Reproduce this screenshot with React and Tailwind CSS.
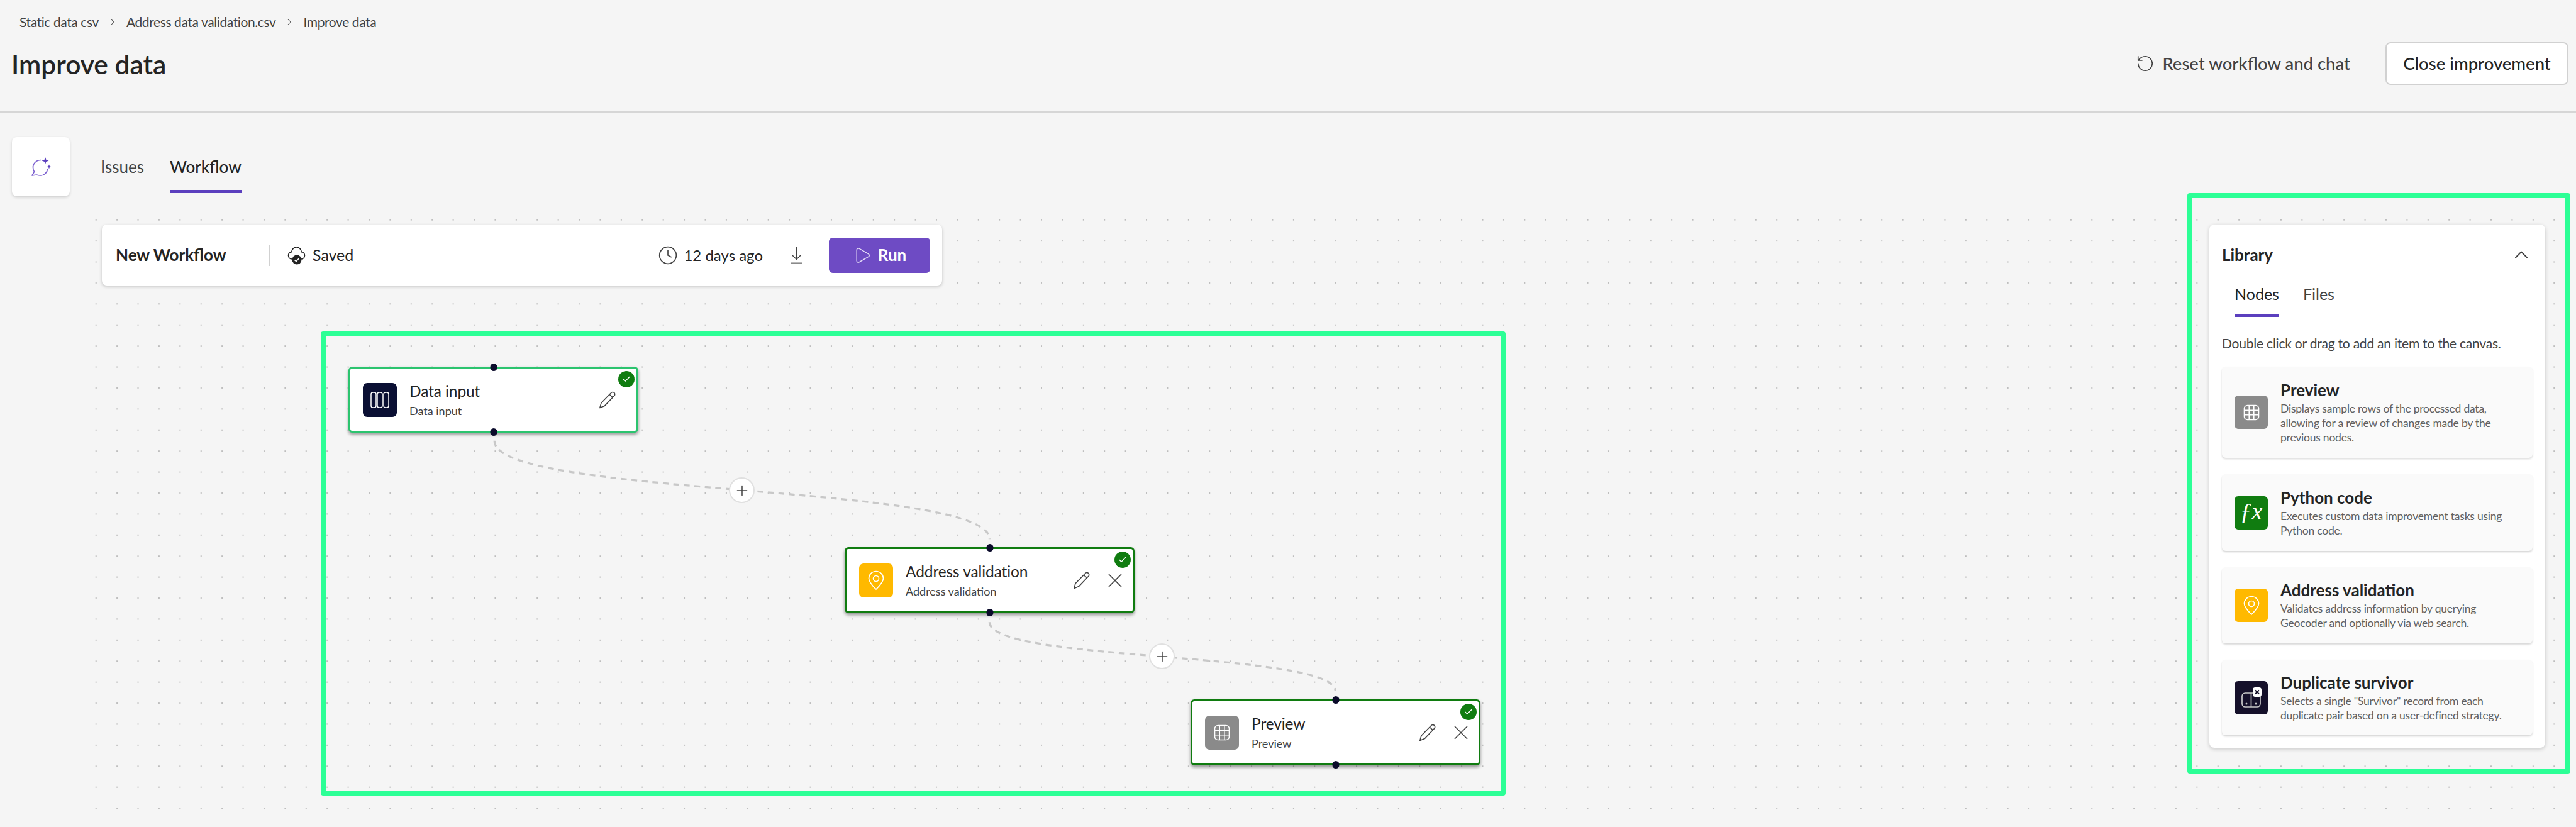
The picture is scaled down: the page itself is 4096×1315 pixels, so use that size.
import { ChevronRight, ChevronUp, Clock, Play, Plus, RotateCcw, Check } from 'lucide-react';

const library = [
  {
    title: 'Preview',
    lines: ['Displays sample rows of the processed data,', 'allowing for a review of changes made by the', 'previous nodes.'],
    color: 'bg-[#8a8a8a]',
    height: 'h-[145px]',
    icon: <GridIcon />,
  },
  {
    title: 'Python code',
    lines: ['Executes custom data improvement tasks using', 'Python code.'],
    color: 'bg-[#107c10]',
    height: 'h-[122px]',
    icon: <FxIcon />,
  },
  {
    title: 'Address validation',
    lines: ['Validates address information by querying', 'Geocoder and optionally via web search.'],
    color: 'bg-[#ffb900]',
    height: 'h-[121px]',
    icon: <PinIcon />,
  },
  {
    title: 'Duplicate survivor',
    lines: ['Selects a single "Survivor" record from each', 'duplicate pair based on a user-defined strategy.'],
    color: 'bg-[#15102a]',
    height: 'h-[120px]',
    icon: <DuplicateIcon />,
  },
];

function GridIcon() {
  return (
    <svg width="26" height="26" viewBox="0 0 26 26" fill="none" stroke="white" strokeWidth="1.6">
      <rect x="1.5" y="1.5" width="23" height="23" rx="5" />
      <path d="M9.2 1.5V24.5M16.8 1.5V24.5M1.5 9.2H24.5M1.5 16.8H24.5" />
    </svg>
  );
}

function FxIcon() {
  return <span className="font-['Liberation_Serif',serif] italic text-[38px] leading-none text-white -mt-1">ƒx</span>;
}

function PinIcon() {
  return (
    <svg width="26" height="32" viewBox="0 0 26 32" fill="none" stroke="white" strokeWidth="1.7">
      <path d="M13 1.5C6.5 1.5 1.5 6.5 1.5 12.8C1.5 19 8.5 25.5 13 30C17.5 25.5 24.5 19 24.5 12.8C24.5 6.5 19.5 1.5 13 1.5Z" />
      <circle cx="13" cy="13" r="4.5" />
    </svg>
  );
}

function DataIcon() {
  return (
    <svg width="30" height="26" viewBox="0 0 30 26" fill="none" stroke="white" strokeWidth="1.5">
      <rect x="1" y="1" width="8" height="24" rx="3" />
      <rect x="11" y="1" width="8" height="24" rx="3" />
      <rect x="21" y="1" width="8" height="24" rx="3" />
    </svg>
  );
}

function DuplicateIcon() {
  return (
    <svg width="32" height="32" viewBox="0 0 32 32" fill="none">
      <rect x="1" y="9" width="29" height="22" rx="5" stroke="#c8c8c8" strokeWidth="1.7" />
      <path d="M15.5 9V31" stroke="#c8c8c8" strokeWidth="1.7" />
      <circle cx="8" cy="26" r="1.5" fill="#c8c8c8" />
      <circle cx="23" cy="26" r="1.5" fill="#c8c8c8" />
      <rect x="18" y="0" width="14" height="15" rx="4" fill="white" />
      <path d="M22 4.5L28 10.5M28 4.5L22 10.5" stroke="#15102a" strokeWidth="1.8" />
    </svg>
  );
}

function ChatIcon() {
  return (
    <svg width="32" height="32" viewBox="0 0 32 32" fill="none">
      <path d="M16 5.5C9 5.5 3.5 10.5 3.5 17C3.5 20 4.5 22.5 5.5 24L2 30L9 29C11 29.5 13 30 15 30C21.5 30 26.5 25 26.5 19" stroke="#7b5fcf" strokeWidth="1.7" strokeLinejoin="round" />
      <path d="M23 1L24.4 5.1L28.5 6.5L24.4 7.9L23 12L21.6 7.9L17.5 6.5L21.6 5.1Z" fill="#5b3fbe" />
      <path d="M29 12.5L29.9 15.1L32 16L29.9 16.9L29 19.5L28.1 16.9L26 16L28.1 15.1Z" fill="#5b3fbe" />
    </svg>
  );
}

function CloudIcon() {
  return (
    <svg width="29" height="30" viewBox="0 0 29 30" fill="none">
      <path d="M8 21C4 21 1.5 18.4 1.5 15.2C1.5 12.2 3.7 9.9 6.6 9.6C7.2 5.3 10.4 2 14.5 2C18.6 2 21.8 5.3 22.4 9.6C25.3 9.9 27.5 12.2 27.5 15.2C27.5 18.4 25 21 21 21" stroke="#242424" strokeWidth="1.6" />
      <circle cx="15" cy="22" r="7.5" fill="#242424" />
      <path d="M11.5 22.3L14 24.7L18.5 19.8" stroke="white" strokeWidth="1.6" />
    </svg>
  );
}

function DownloadIcon() {
  return (
    <svg width="21" height="29" viewBox="0 0 21 29" fill="none">
      <path d="M10.5 1V21M3 14L10.5 21.5L18 14" stroke="#424242" strokeWidth="1.5" />
      <path d="M1 27.5H20" stroke="#8a8a8a" strokeWidth="2.2" />
    </svg>
  );
}

function PencilIcon() {
  return (
    <svg width="28" height="28" viewBox="0 0 28 28" fill="none" stroke="#424242" strokeWidth="1.6" strokeLinejoin="round">
      <path d="M19.6 2.7a3.4 3.4 0 0 1 5.2 4.6L9.2 23.6L1.8 26.4L4 18.8Z" />
      <path d="M17.2 5.4L22.6 10" />
    </svg>
  );
}

function CloseIcon() {
  return (
    <svg width="22" height="22" viewBox="0 0 22 22" fill="none" stroke="#424242" strokeWidth="1.6">
      <path d="M1 1L21 21M21 1L1 21" />
    </svg>
  );
}

function Node({ title, color, icon, border, position, canClose }) {
  return (
    <div className={`absolute ${position} w-[461px] h-[105px] bg-white rounded-[6px] border-[3px] ${border} shadow-[0_3px_5px_rgba(0,0,0,0.4)] flex items-center pl-[20px]`}>
      <div className="absolute left-1/2 -translate-x-1/2 -top-[8px] w-[11px] h-[12px] rounded-full bg-[#0b0b2b]" />
      <div className="absolute left-1/2 -translate-x-1/2 -bottom-[8px] w-[11px] h-[12px] rounded-full bg-[#0b0b2b]" />
      <div className="absolute top-[4px] right-[3px] w-[26px] h-[26px] rounded-full bg-[#107c10] flex items-center justify-center">
        <Check size={16} color="white" strokeWidth={2} />
      </div>
      <div className={`w-[54px] h-[54px] rounded-[7px] ${color} flex items-center justify-center shrink-0`}>{icon}</div>
      <div className="ml-[20px] flex flex-col">
        <span className="text-[24.5px] leading-[32px] tracking-[-0.1px] text-[#242424]">{title}</span>
        <span className="text-[18px] leading-[24px] mt-[3px] text-[#424242]">{title}</span>
      </div>
      <div className={`ml-auto flex items-center gap-[28px] ${canClose ? 'pr-[17px]' : 'pr-[32px]'}`}>
        <PencilIcon />
        {canClose && <CloseIcon />}
      </div>
    </div>
  );
}

function AddButton({ position }) {
  return (
    <div className={`absolute ${position} w-[41px] h-[41px] rounded-full bg-white border-2 border-[#e0e0e0] flex items-center justify-center`}>
      <Plus size={26} color="#424242" strokeWidth={1.4} />
    </div>
  );
}

export default function App() {
  return (
    <div className="relative w-[4096px] h-[1315px] overflow-hidden bg-[#f5f5f5] flex flex-col font-['Lato','Liberation_Sans',sans-serif] text-[#242424]">
      <header className="h-[179px] shrink-0 border-b-[3px] border-[#d6d6d6] flex justify-between pr-[12px]">
        <div className="flex flex-col">
          <div className="flex items-center gap-[13px] ml-[31px] mt-[20px] h-[30px] text-[21px] tracking-[-0.4px] text-[#424242]">
            <span>Static data csv</span>
            <ChevronRight size={18} strokeWidth={1.4} />
            <span>Address data validation.csv</span>
            <ChevronRight size={18} strokeWidth={1.4} />
            <span>Improve data</span>
          </div>
          <h1 className="ml-[18px] mt-[24px] text-[42.5px] leading-[56px] font-semibold">Improve data</h1>
        </div>
        <div className="flex items-center h-[68px] mt-[67px]">
          <RotateCcw size={30} strokeWidth={1.3} color="#424242" />
          <span className="ml-[12px] text-[27.5px] font-medium text-[#424242]">Reset workflow and chat</span>
          <button className="ml-[56px] w-[291px] h-[68px] rounded-[8px] bg-white border-2 border-[#d1d1d1] text-[27.5px] font-medium">Close improvement</button>
        </div>
      </header>

      <div className="h-[154px] shrink-0 flex items-start">
        <div className="ml-[19px] mt-[39px] w-[92px] h-[94px] rounded-[8px] bg-white shadow-[0_2px_4px_rgba(0,0,0,0.16)] flex items-center justify-center">
          <ChatIcon />
        </div>
        <div className="ml-[49px] mt-[68px] flex gap-[41px] text-[26px] leading-[36px]">
          <span className="text-[#424242]">Issues</span>
          <div className="flex flex-col font-medium">
            <span>Workflow</span>
            <div className="mt-[19px] h-[5px] bg-[#5b3fbe]" />
          </div>
        </div>
      </div>

      <main className="relative ml-[136px] mr-[18px] flex-1 flex justify-between items-start pt-[24px] pl-[26px] pr-[31px] bg-[radial-gradient(circle,#bdbdbd_1px,transparent_1.4px)] bg-[size:33.42px_33.42px]">
        <svg className="absolute inset-0 w-full h-full" viewBox="146.1 357.8 4234.6 1055.2" fill="none" stroke="#c8c8c8" strokeWidth="3.5" strokeDasharray="10 8">
          <path d="M844 753C844 850 1690 825 1690 921" />
          <path d="M1690 1063C1690 1132 2281 1112 2281 1181" />
        </svg>

        <div className="relative w-[1336px] h-[97px] rounded-[8px] bg-white shadow-[0_2px_5px_rgba(0,0,0,0.2)] flex items-center pl-[22px] pr-[19px]">
          <span className="w-[244px] text-[26px] font-bold">New Workflow</span>
          <div className="w-[1px] h-[34px] bg-[#d1d1d1]" />
          <div className="ml-[28px]"><CloudIcon /></div>
          <span className="ml-[11px] text-[25px]">Saved</span>
          <Clock className="ml-auto" size={32} strokeWidth={1.25} color="#424242" />
          <span className="ml-[9px] text-[24px]">12 days ago</span>
          <div className="ml-[43px]"><DownloadIcon /></div>
          <button className="ml-[41px] w-[161px] h-[56px] rounded-[6px] bg-[#6e4bc4] flex items-center justify-center gap-[10px] text-white text-[26px] font-bold">
            <Play size={30} strokeWidth={1.2} color="#e6def8" />
            Run
          </button>
        </div>

        <aside className="relative w-[534px] h-[832px] rounded-[8px] bg-white shadow-[0_2px_6px_rgba(0,0,0,0.2)] px-[20px]">
          <div className="flex items-center justify-between h-[34px] mt-[31px]">
            <span className="text-[26px] font-bold">Library</span>
            <ChevronUp size={36} strokeWidth={1.3} color="#424242" />
          </div>
          <div className="ml-[20px] mt-[27px] flex gap-[38px] text-[25px] leading-[36px]">
            <div className="flex flex-col">
              <span>Nodes</span>
              <div className="mt-[14px] h-[5px] bg-[#5b3fbe]" />
            </div>
            <span className="text-[#424242]">Files</span>
          </div>
          <p className="mt-[27px] text-[21px] leading-[30px] tracking-[-0.22px] text-[#424242]">Double click or drag to add an item to the canvas.</p>
          <div className="mt-[22px] flex flex-col gap-[26px]">
            {library.map(item => (
              <div key={item.title} className={`${item.height} rounded-[6px] bg-[#fafafa] shadow-[0_2px_3px_rgba(0,0,0,0.16)] flex items-center pl-[20px]`}>
                <div className={`w-[53px] h-[53px] rounded-[6px] ${item.color} flex items-center justify-center shrink-0`}>{item.icon}</div>
                <div className="ml-[20px]">
                  <div className="text-[26px] leading-[30px] font-bold">{item.title}</div>
                  <div className="mt-[3px] text-[17.5px] leading-[23px] tracking-[-0.22px] text-[#616161]">
                    {item.lines.map(line => <div key={line}>{line}</div>)}
                  </div>
                </div>
              </div>
            ))}
          </div>
        </aside>

        <Node title="Data input" color="bg-[#0a0f33]" icon={<DataIcon />} border="border-[#2cc46f]" position="left-[418px] top-[250px]" />
        <Node title="Address validation" color="bg-[#ffb900]" icon={<PinIcon />} border="border-[#107c10]" position="left-[1207px] top-[537px]" canClose />
        <Node title="Preview" color="bg-[#8a8a8a]" icon={<GridIcon />} border="border-[#107c10]" position="left-[1757px] top-[779px]" canClose />
        <AddButton position="left-[1023px] top-[426px]" />
        <AddButton position="left-[1691px] top-[690px]" />
      </main>

      <div className="absolute left-[510px] top-[527px] w-[1884px] h-[738px] rounded-[4px] border-[8px] border-[#2cff96]" />
      <div className="absolute left-[3478px] top-[307px] w-[609px] h-[923px] rounded-[4px] border-[8px] border-[#2cff96]" />
    </div>
  );
}
